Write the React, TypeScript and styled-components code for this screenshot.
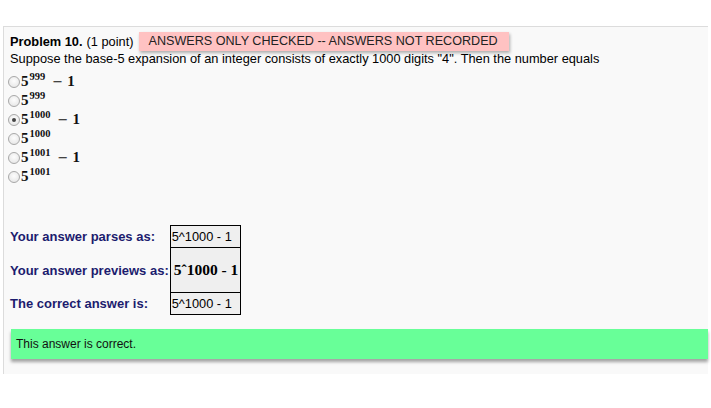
import React from "react";
import styled, { createGlobalStyle } from "styled-components";

const Global = createGlobalStyle`
  html, body { margin: 0; padding: 0; background: #fff; }
  body { font-family: "Liberation Sans", Arial, sans-serif; font-size: 12.8px; color: #000; }
`;

const Page = styled.div`
  width: 711px;
  height: 408px;
  padding-top: 26px;
  padding-left: 3px;
  box-sizing: border-box;
  overflow: hidden;
`;

const Panel = styled.div`
  width: 705px;
  background: #f9f9f9;
  border-top: 1px solid #dcdcdc;
  border-left: 1px solid #dcdcdc;
  padding: 4px 0 15px 6px;
  box-sizing: border-box;
`;

const TitleRow = styled.div`
  display: flex;
  align-items: center;
  height: 20px;
  font-size: 12.8px;
`;

const Bold = styled.b`
  font-weight: bold;
  margin-right: 4px;
`;

const Badge = styled.span`
  margin-left: 5px;
  background: #ffc2c2;
  color: #222;
  padding: 0 11px 0 10px;
  height: 19px;
  line-height: 19px;
  font-size: 12.6px;
  box-shadow: 1px 2px 3px rgba(0, 0, 0, 0.3);
`;

const Question = styled.div`
  line-height: 15px;
  font-size: 12.8px;
  margin-top: 0;
`;

const Choices = styled.div`
  display: flex;
  flex-direction: column;
  margin-top: 3px;
`;

const Choice = styled.label`
  display: flex;
  align-items: center;
  height: 19px;
  margin-left: -2px;
`;

const Radio = styled.span<{ $checked?: boolean }>`
  flex: none;
  width: 10px;
  height: 10px;
  border-radius: 50%;
  border: 1px solid #a8a8a8;
  background: radial-gradient(circle at 50% 40%, #fdfdfd 0%, #e2e2e2 100%);
  display: inline-flex;
  align-items: center;
  justify-content: center;
  margin-top: 6px;
  margin-right: 1px;
  &::after {
    content: "";
    width: 4px;
    height: 4px;
    border-radius: 50%;
    background: ${(p) => (p.$checked ? "#444" : "transparent")};
  }
`;

const Math = styled.span`
  font-family: "Liberation Serif", "DejaVu Serif", serif;
  font-size: 15px;
  font-weight: bold;
  display: inline-block;
  line-height: 19px;
  white-space: nowrap;
  color: #111;
`;

const Sup = styled.span`
  font-size: 10.5px;
  vertical-align: 6px;
  margin-left: 1px;
`;

const Minus = styled.span`
  margin-left: 7px;
  font-family: "DejaVu Sans", sans-serif;
  font-weight: normal;
  font-size: 13px;
`;

const One = styled.span`
  margin-left: 4px;
`;

const Results = styled.table`
  border-collapse: collapse;
  margin-top: 42px;
  margin-left: 0;
`;

const Label = styled.td`
  color: #1c1c6e;
  font-weight: bold;
  font-size: 13px;
  padding: 0 1px 0 0;
  white-space: nowrap;
  text-align: left;
`;

const Cell = styled.td<{ $h: number }>`
  border: 1px solid #000;
  background: #efefef;
  height: ${(p) => p.$h}px;
  padding: 0 1px 0 1px;
  font-size: 12.8px;
  white-space: nowrap;
  box-sizing: border-box;
`;

const Preview = styled.span`
  font-family: "Liberation Serif", "DejaVu Serif", serif;
  font-weight: bold;
  font-size: 15.5px;
  padding: 0 1px 0 2px;
`;

const Correct = styled.div`
  margin-top: 14px;
  margin-left: 1px;
  height: 30px;
  line-height: 30px;
  background: #68ff98;
  padding-left: 5px;
  font-size: 12px;
  color: #111;
  box-shadow: 0 3px 3px rgba(0, 0, 0, 0.35);
`;

type Opt = { exp: string; minus: boolean; checked?: boolean };
const options: Opt[] = [
  { exp: "999", minus: true },
  { exp: "999", minus: false },
  { exp: "1000", minus: true, checked: true },
  { exp: "1000", minus: false },
  { exp: "1001", minus: true },
  { exp: "1001", minus: false },
];

export default function App() {
  return (
    <>
      <Global />
      <Page>
        <Panel>
          <TitleRow>
            <Bold>Problem 10.</Bold> (1 point)
            <Badge>ANSWERS ONLY CHECKED -- ANSWERS NOT RECORDED</Badge>
          </TitleRow>
          <Question>
            Suppose the base-5 expansion of an integer consists of exactly 1000 digits "4". Then the number equals
          </Question>
          <Choices>
            {options.map((o, i) => (
              <Choice key={i}>
                <Radio $checked={o.checked} />
                <Math>
                  5<Sup>{o.exp}</Sup>
                  {o.minus && (
                    <>
                      <Minus>−</Minus>
                      <One>1</One>
                    </>
                  )}
                </Math>
              </Choice>
            ))}
          </Choices>
          <Results>
            <tbody>
              <tr>
                <Label>Your answer parses as:</Label>
                <Cell $h={22}>5^1000 - 1</Cell>
              </tr>
              <tr>
                <Label>Your answer previews as:</Label>
                <Cell $h={45}>
                  <Preview>5ˆ1000 - 1</Preview>
                </Cell>
              </tr>
              <tr>
                <Label>The correct answer is:</Label>
                <Cell $h={22}>5^1000 - 1</Cell>
              </tr>
            </tbody>
          </Results>
          <Correct>This answer is correct.</Correct>
        </Panel>
      </Page>
    </>
  );
}
